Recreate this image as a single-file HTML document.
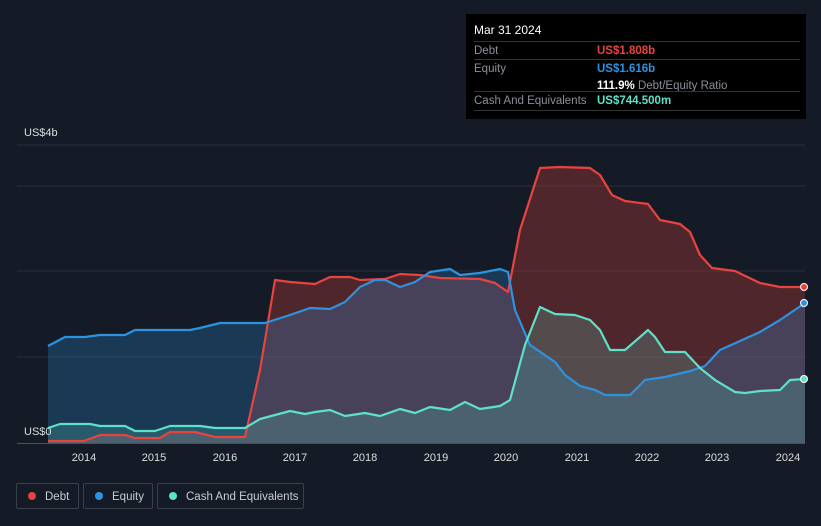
<!DOCTYPE html><html><head><style>
body{margin:0;background:#151b26;width:821px;height:526px;overflow:hidden;font-family:"Liberation Sans",sans-serif;position:relative}
.tt{position:absolute;left:466px;top:14px;width:340px;height:105px;background:#000;font-size:11.5px}
.r{position:absolute;left:8px;width:326px;border-top:1px solid #333;height:18px;line-height:18px;color:#8a8f98}
.v{position:absolute;left:123px;font-weight:bold}
.leg{position:absolute;top:483px;height:26px;border:1px solid #3a404b;border-radius:2px;color:#c9ccd1;font-size:11.5px;line-height:26px;box-sizing:border-box;white-space:nowrap}
.leg i{display:inline-block;width:8px;height:8px;border-radius:50%;margin:0 9px 0 11px;vertical-align:0}
</style></head><body>
<div class="tt">
<div style="position:absolute;left:8px;top:9px;color:#fff;font-size:12px">Mar 31 2024</div>
<div class="r" style="top:27px">Debt<span class="v" style="color:#e8443f">US$1.808b</span></div>
<div class="r" style="top:45px">Equity<span class="v" style="color:#2d93e0">US$1.616b</span></div>
<div class="r" style="top:63px;border:none"><span class="v" style="color:#fff">111.9% <span style="color:#8a8f98;font-weight:normal">Debt/Equity Ratio</span></span></div>
<div class="r" style="top:77px;height:18px;border-bottom:1px solid #333">Cash And Equivalents<span class="v" style="color:#5fe0c8">US$744.500m</span></div>
</div>
<svg width="821" height="526" style="position:absolute;left:0;top:0">
<g stroke="#262d39"><line x1="17" y1="145" x2="805" y2="145"/><line x1="17" y1="186" x2="805" y2="186"/><line x1="17" y1="271" x2="805" y2="271"/><line x1="17" y1="357" x2="805" y2="357"/></g>
<text x="24" y="136" fill="#ddd" font-size="11">US$4b</text>
<polygon fill="#e8443f" fill-opacity="0.28" points="48,443 48,441 84,441 100,435 125,435 135,438 160,438 170,432 195,432 215,437 245,437 260,370 275,280 290,282 315,284 330,277 350,277 360,280 385,279 400,274 420,275 440,278 480,279 495,283 508,292 520,230 540,168 560,167 590,168 600,175 612,195 625,201 648,204 660,220 680,224 690,232 700,255 712,268 735,271 760,283 780,287 805,287 805,443"/>
<polygon fill="#2d93e0" fill-opacity="0.25" points="48,443 48,346 65,337 85,337 100,335 125,335 135,330 190,330 200,328 220,323 265,323 290,315 310,308 330,309 345,302 360,287 375,280 385,280 400,287 415,282 430,272 450,269 460,275 480,273 500,269 508,272 515,310 530,345 555,362 565,375 580,386 595,390 605,395 630,395 645,380 665,377 690,371 705,366 720,350 740,341 760,332 780,320 805,303 805,443"/>
<polygon fill="#5fe0c8" fill-opacity="0.2" points="48,443 48,428 60,424 90,424 100,426 125,426 135,431 155,431 170,426 200,426 215,428 245,428 260,419 275,415 290,411 305,414 315,412 330,410 345,416 365,413 380,416 400,409 415,413 430,407 450,410 465,402 480,409 500,406 510,400 525,345 540,307 555,314 575,315 590,320 600,330 610,350 625,350 640,337 648,330 655,337 665,352 685,352 700,368 715,380 735,392 745,393 760,391 780,390 790,380 805,379 805,443"/>
<g fill="none" stroke-width="2.2" stroke-linejoin="round">
<polyline stroke="#e8443f" points="48,441 84,441 100,435 125,435 135,438 160,438 170,432 195,432 215,437 245,437 260,370 275,280 290,282 315,284 330,277 350,277 360,280 385,279 400,274 420,275 440,278 480,279 495,283 508,292 520,230 540,168 560,167 590,168 600,175 612,195 625,201 648,204 660,220 680,224 690,232 700,255 712,268 735,271 760,283 780,287 805,287"/>
<polyline stroke="#2d93e0" points="48,346 65,337 85,337 100,335 125,335 135,330 190,330 200,328 220,323 265,323 290,315 310,308 330,309 345,302 360,287 375,280 385,280 400,287 415,282 430,272 450,269 460,275 480,273 500,269 508,272 515,310 530,345 555,362 565,375 580,386 595,390 605,395 630,395 645,380 665,377 690,371 705,366 720,350 740,341 760,332 780,320 805,303"/>
<polyline stroke="#5fe0c8" points="48,428 60,424 90,424 100,426 125,426 135,431 155,431 170,426 200,426 215,428 245,428 260,419 275,415 290,411 305,414 315,412 330,410 345,416 365,413 380,416 400,409 415,413 430,407 450,410 465,402 480,409 500,406 510,400 525,345 540,307 555,314 575,315 590,320 600,330 610,350 625,350 640,337 648,330 655,337 665,352 685,352 700,368 715,380 735,392 745,393 760,391 780,390 790,380 805,379"/>
</g>
<g stroke="#fff" stroke-width="1"><circle cx="804" cy="287" r="3.5" fill="#e8443f"/><circle cx="804" cy="303" r="3.5" fill="#2d93e0"/><circle cx="804" cy="379" r="3.5" fill="#5fe0c8"/></g>
<line x1="17" y1="443.5" x2="805" y2="443.5" stroke="#4a505a"/>
<text x="24" y="435" fill="#ddd" font-size="11">US$0</text>
<g fill="#ddd" font-size="11" text-anchor="middle"><text x="84" y="461">2014</text><text x="154" y="461">2015</text><text x="225" y="461">2016</text><text x="295" y="461">2017</text><text x="365" y="461">2018</text><text x="436" y="461">2019</text><text x="506" y="461">2020</text><text x="577" y="461">2021</text><text x="647" y="461">2022</text><text x="717" y="461">2023</text><text x="788" y="461">2024</text></g>
</svg>
<div class="leg" style="left:16px;width:63px"><i style="background:#e8443f"></i>Debt</div>
<div class="leg" style="left:83px;width:70px"><i style="background:#2d93e0"></i>Equity</div>
<div class="leg" style="left:157px;width:147px"><i style="background:#5fe0c8"></i>Cash And Equivalents</div>
</body></html>
